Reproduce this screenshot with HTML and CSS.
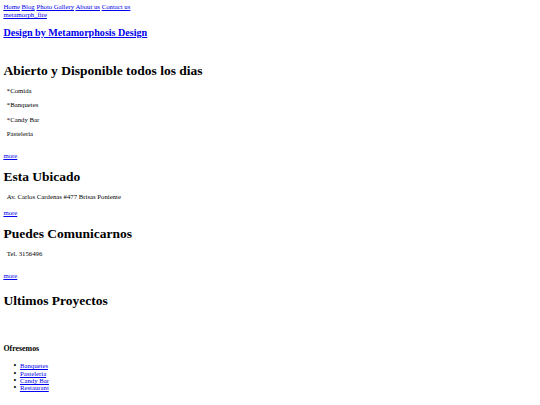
FILE: index.html
```html
<!DOCTYPE html>
<html>
<head>
<meta charset="utf-8">
<link rel="stylesheet" href="styles.css">
</head>
<body>
<div class="nav">
  <a href="#">Home</a> <a href="#">Blog</a> <a href="#">Photo Gallery</a> <a href="#">About us</a> <a href="#">Contact us</a><br>
  <a href="#">metamorph_fire</a>
</div>
<h2 class="site-title"><a href="#">Design by Metamorphosis Design</a></h2>

<div class="section first">
  <h1>Abierto y Disponible todos los dias</h1>
  <p>*Comida</p>
  <p>*Banquetes</p>
  <p>*Candy Bar</p>
  <p>Pasteleria</p>
  <a class="more gap" href="#">more</a>
</div>

<div class="section">
  <h1>Esta Ubicado</h1>
  <p>Av. Carlos Cardenas #477 Brisas Poniente</p>
  <a class="more" href="#">more</a>
</div>

<div class="section">
  <h1>Puedes Comunicarnos</h1>
  <p>Tel. 3156496</p>
  <a class="more gap" href="#">more</a>
</div>

<div class="section last">
  <h1>Ultimos Proyectos</h1>
</div>

<div class="sidebar">
  <h3>Ofresemos</h3>
  <ul>
    <li><a href="#">Banquetes</a></li>
    <li><a href="#">Pasteleria</a></li>
    <li><a href="#">Candy Bar</a></li>
    <li><a href="#">Restaurant</a></li>
  </ul>
</div>
</body>
</html>
```

FILE: styles.css
```css
html, body {
  background: #fff;
}
body {
  margin: 3.4px;
  font-family: "Liberation Serif", "Times New Roman", serif;
  font-size: 6.75px;
  line-height: 7.6px;
  color: #000;
}
a {
  color: #0000ee;
}
.site-title {
  font-size: 10.1px;
  line-height: 11.6px;
  margin: 8.4px 0;
}
.section h1 {
  font-size: 13.5px;
  line-height: 15.5px;
  margin: 9px 0;
}
.section.first h1 {
  margin-top: 24px;
}
.section p {
  margin: 6.75px 0;
  padding-left: 3.4px;
}
.more {
  display: block;
  width: max-content;
  margin-top: 8.5px;
}
.more.gap {
  margin-top: 14.3px;
}
.section.last h1 {
  margin-top: 13px;
}
.sidebar h3 {
  font-size: 7.9px;
  line-height: 9px;
  margin: 35.5px 0 9.5px;
}
.sidebar ul {
  margin: 0;
  padding-left: 16.5px;
  line-height: 7.4px;
  list-style: none;
}
.sidebar li::before {
  content: "\2022";
  display: inline-block;
  width: 6.5px;
  margin-left: -6.5px;
  font-size: 8px;
  color: #000;
}
```
